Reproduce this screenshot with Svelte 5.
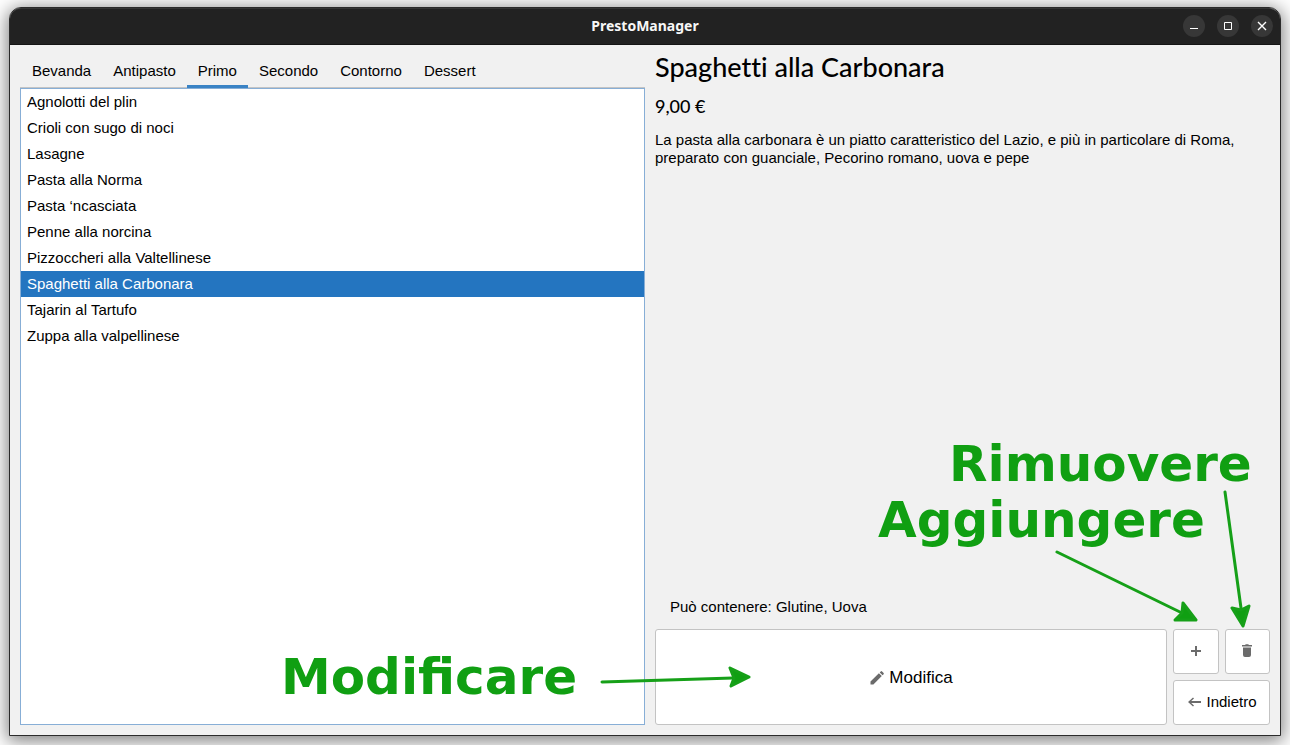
<script>
  const menu = {
    Bevanda: [],
    Antipasto: [],
    Primo: [
      'Agnolotti del plin',
      'Crioli con sugo di noci',
      'Lasagne',
      'Pasta alla Norma',
      'Pasta ‘ncasciata',
      'Penne alla norcina',
      'Pizzoccheri alla Valtellinese',
      'Spaghetti alla Carbonara',
      'Tajarin al Tartufo',
      'Zuppa alla valpellinese',
    ],
    Secondo: [],
    Contorno: [],
    Dessert: [],
  };

  let category = $state('Primo');
  let selected = $state('Spaghetti alla Carbonara');
</script>

<div class="desktop">
  <div class="window">
    <header class="titlebar">
      <span class="app-name">PrestoManager</span>
      <div class="controls">
        <button class="control" aria-label="Riduci a icona">
          <svg viewBox="0 0 22 22"><path d="M7 13.5h8" /></svg>
        </button>
        <button class="control" aria-label="Massimizza">
          <svg viewBox="0 0 22 22"><path d="M7.5 7.5h7v7h-7z" /></svg>
        </button>
        <button class="control" aria-label="Chiudi">
          <svg viewBox="0 0 22 22"><path class="cross" d="M7 7l8 8M15 7l-8 8" /></svg>
        </button>
      </div>
    </header>

    <main class="content">
      <section class="catalog">
        <div class="tabs" role="tablist">
          {#each Object.keys(menu) as name}
            <button
              class="tab"
              class:active={name === category}
              role="tab"
              aria-selected={name === category}
              onclick={() => (category = name)}>{name}</button>
          {/each}
        </div>
        <ul class="dishes" role="listbox">
          {#each menu[category] as dish}
            <li role="option" aria-selected={dish === selected}>
              <button class="dish" class:selected={dish === selected} onclick={() => (selected = dish)}>{dish}</button>
            </li>
          {/each}
        </ul>
      </section>

      <section class="details">
        <h1>Spaghetti alla Carbonara</h1>
        <h2>9,00 €</h2>
        <p class="description">
          La pasta alla carbonara è un piatto caratteristico del Lazio, e più in particolare di Roma, preparato con
          guanciale, Pecorino romano, uova e pepe
        </p>
        <p class="allergens">Può contenere: Glutine, Uova</p>
        <div class="actions">
          <button class="action edit">
            <svg class="icon" viewBox="0 0 16 16">
              <path d="M1.5 11.6 9.9 3.2l2.9 2.9-8.4 8.4H1.5zM10.7 2.4l1-1q.7-.6 1.4 0l1.5 1.5q.6.7 0 1.4l-1 1z" />
            </svg>
            Modifica
          </button>
          <button class="action" aria-label="Aggiungi">
            <svg class="icon" viewBox="0 0 16 16"><path d="M7 3h2v4h4v2H9v4H7V9H3V7h4z" /></svg>
          </button>
          <button class="action" aria-label="Rimuovi">
            <svg class="icon" viewBox="0 0 16 16">
              <path d="M2 2h3l.8-.8h2.4L9 2h3v1.6H2zM3 4.6h8V12q0 2-2 2H5q-2 0-2-2z" />
            </svg>
          </button>
          <button class="action back">
            <svg class="icon" viewBox="0 0 16 16">
              <path d="M2 8l5-4.6 1 1.1L5.2 7.1H15v1.8H5.2L8 11.5l-1 1.1z" />
            </svg>
            Indietro
          </button>
        </div>
      </section>
    </main>

    <svg class="notes" viewBox="270 430 1010 305">
      <text x="949" y="481">Rimuovere</text>
      <text x="878" y="537">Aggiungere</text>
      <text x="281" y="694">Modificare</text>
      <path class="line" d="M1225 492 1241 608M1057 552 1182 613M602 682 733 678" />
      <path class="head" d="M1243 626 1232 608 1241 610 1249 606zM1196 620 1175 620 1182 613 1183 603zM749 677 731 686 734 678 730 668z" />
    </svg>
  </div>
</div>

<style>
  :global(body) {
    margin: 0;
    background: #fff;
  }

  .desktop {
    box-sizing: border-box;
    display: flex;
    min-height: 100vh;
    padding: 7px 9px 9px;
    overflow: hidden;
    font-family: 'Liberation Sans', Arial, sans-serif;
    font-size: 15px;
    line-height: 18px;
    color: #000;
  }

  .window {
    position: relative;
    display: flex;
    flex: 1;
    flex-direction: column;
    min-width: 0;
    border: 1px solid #2b2b2b;
    border-radius: 12px 12px 0 0;
    background: #f1f1f1;
    box-shadow: 0 3px 18px 2px rgba(0, 0, 0, 0.5);
  }

  .titlebar {
    box-sizing: border-box;
    display: grid;
    grid-template-columns: 1fr auto 1fr;
    align-items: center;
    height: 37px;
    padding-bottom: 2px;
    border-top: 1px solid #353535;
    border-bottom: 1px solid #151515;
    border-radius: 11px 11px 0 0;
    background: #222;
  }

  .app-name {
    grid-column: 2;
    font-family: 'Noto Sans', 'Open Sans', sans-serif;
    font-size: 14px;
    font-weight: 700;
    color: #f7f7f7;
  }

  .controls {
    display: flex;
    gap: 12px;
    justify-content: flex-end;
    padding-right: 7px;
  }

  .control {
    display: flex;
    width: 22px;
    height: 22px;
    padding: 0;
    border: 0;
    border-radius: 50%;
    background: #373737;
  }

  .control svg {
    width: 22px;
    height: 22px;
    fill: none;
    stroke: #fff;
    stroke-width: 1;
  }

  .control .cross {
    stroke-width: 1.4;
  }

  .content {
    display: grid;
    flex: 1;
    grid-template-columns: 1fr 1fr;
    padding: 10px;
  }

  .catalog,
  .details {
    display: flex;
    flex-direction: column;
    min-width: 0;
  }

  .tabs {
    display: flex;
    padding-left: 1px;
    box-shadow: inset 0 -1px #c4c4c4;
  }

  .tab {
    height: 33px;
    padding: 0 11px 2px;
    border: 0;
    background: none;
    font: inherit;
    color: inherit;
  }

  .tab.active {
    box-shadow: inset 0 -3px #3a83c5;
  }

  .dishes {
    flex: 1;
    margin: 0;
    padding: 0;
    border: 1px solid #87aed6;
    background: #fff;
    list-style: none;
  }

  .dish {
    display: block;
    width: 100%;
    height: 26px;
    padding: 0 6px;
    border: 0;
    background: none;
    font: inherit;
    text-align: left;
    color: inherit;
  }

  .dish.selected {
    background: #2475c0;
    color: #fff;
  }

  .details {
    padding-left: 10px;
  }

  h1,
  h2,
  p {
    margin: 0;
  }

  h1,
  h2 {
    font-family: Lato, sans-serif;
    font-weight: 500;
    font-variant-ligatures: none;
  }

  h1 {
    font-size: 27px;
    line-height: 24px;
  }

  h2 {
    padding: 14px 0 12px;
    font-size: 18px;
    line-height: 26px;
  }

  .allergens {
    margin-top: auto;
    padding: 0 15px 13px;
  }

  .actions {
    display: grid;
    grid-template-columns: 1fr 46px 45px;
    grid-template-rows: 45px 45px;
    gap: 6px;
  }

  .action {
    display: flex;
    gap: 4px;
    align-items: center;
    justify-content: center;
    padding: 0 0 2px;
    border: 1px solid #c3c3c3;
    border-radius: 3px;
    background: #fff;
    font: inherit;
    color: inherit;
  }

  .edit {
    grid-row: span 2;
    padding: 2px 0 0;
    font-size: 17px;
  }

  .back {
    grid-column: 2 / 4;
  }

  .icon {
    width: 16px;
    height: 16px;
    fill: #6b6b6b;
  }

  .notes {
    position: absolute;
    right: 0;
    bottom: 0;
    width: 1010px;
    height: 305px;
    pointer-events: none;
    fill: #109f12;
    font-family: 'DejaVu Sans', sans-serif;
    font-size: 50px;
    font-weight: 700;
  }

  .notes path {
    stroke: #16a018;
    stroke-width: 3;
    stroke-linecap: round;
    stroke-linejoin: round;
  }

  .notes .line {
    fill: none;
  }
</style>
